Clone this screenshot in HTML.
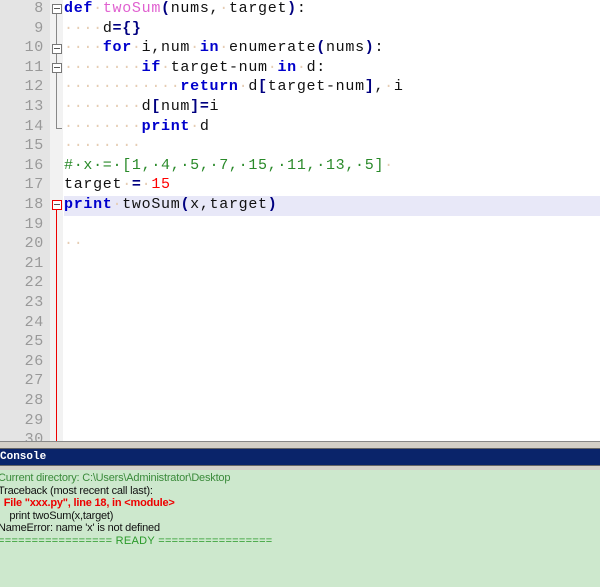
<!DOCTYPE html>
<html><head><style>
body{margin:0;width:600px;height:587px;overflow:hidden;background:#fff;position:relative;font-family:"Liberation Mono",monospace}
#gut{position:absolute;left:0;top:0;width:50px;height:442px;background:#e4e4e4}
#fold{position:absolute;left:50px;top:0;width:13px;height:442px;background:#f2f2f2}
.ln{position:absolute;left:0;width:44px;text-align:right;color:#999;font-size:15px;line-height:19.6px;letter-spacing:0.7px}
.cl{position:absolute;left:64px;font-size:15px;letter-spacing:0.7px;line-height:19.6px;white-space:pre;color:#111}
.k{color:#00c;font-weight:bold}.f{color:#e060d0}.o{color:#000080;font-weight:bold}.d{color:#e6cdb4}.c{color:#2a8a2a}.n{color:#f00}
.box{position:absolute;left:52px;width:8px;height:8px;border:1px solid #777;background:#fff}
.box:after{content:"";position:absolute;left:1px;top:3px;width:6px;height:1px;background:#555}
#con{position:absolute;left:0;top:470px;width:600px;height:117px;background:#cde8cd;font-family:"Liberation Sans",sans-serif;font-size:11px;letter-spacing:-0.2px;line-height:12.6px;color:#111}
</style></head><body>
<div id="gut"></div><div id="fold"></div>
<div style="position:absolute;left:64px;top:196px;width:536px;height:20px;background:#e8e8f8"></div>
<div style="position:absolute;left:56px;top:13px;width:1px;height:116px;background:#888"></div>
<div style="position:absolute;left:56px;top:128px;width:6px;height:1px;background:#888"></div>
<div style="position:absolute;left:56px;top:210px;width:1px;height:232px;background:#e00"></div>
<div class="box" style="top:4px"></div>
<div class="box" style="top:44px"></div>
<div class="box" style="top:63px"></div>
<div class="box" style="top:200px;border-color:#e00"></div>
<div id="nums"></div>
<script>
var h='';for(var i=8;i<=30;i++){h+='<div class="ln" style="top:'+((i-8)*19.6-1)+'px">'+i+'</div>'}
document.getElementById('nums').innerHTML=h;
</script>
<div class="cl" style="top:-1px"><span class="k">def</span><span class="d">·</span><span class="f">twoSum</span><span class="o">(</span>nums,<span class="d">·</span>target<span class="o">)</span>:
<span class="d">····</span>d<span class="o">={}</span>
<span class="d">····</span><span class="k">for</span><span class="d">·</span>i,num<span class="d">·</span><span class="k">in</span><span class="d">·</span>enumerate<span class="o">(</span>nums<span class="o">)</span>:
<span class="d">········</span><span class="k">if</span><span class="d">·</span>target-num<span class="d">·</span><span class="k">in</span><span class="d">·</span>d:
<span class="d">············</span><span class="k">return</span><span class="d">·</span>d<span class="o">[</span>target-num<span class="o">]</span>,<span class="d">·</span>i
<span class="d">········</span>d<span class="o">[</span>num<span class="o">]=</span>i
<span class="d">········</span><span class="k">print</span><span class="d">·</span>d
<span class="d">········</span>
<span class="c">#·x·=·[1,·4,·5,·7,·15,·11,·13,·5]</span><span class="d">·</span>
target<span class="d">·</span><span class="o">=</span><span class="d">·</span><span class="n">15</span>
<span class="k">print</span><span class="d">·</span>twoSum<span class="o">(</span>x,target<span class="o">)</span>

<span class="d">··</span></div>
<div style="position:absolute;left:0;top:441px;width:600px;height:8px;background:#d4d0c8;border-top:1px solid #888;border-bottom:1px solid #666;box-sizing:border-box"></div>
<div style="position:absolute;left:0;top:449px;width:600px;height:16px;background:#0a246a;color:#fff;font-family:'Liberation Mono',monospace;font-size:11px;line-height:16px;font-weight:bold">Console</div>
<div style="position:absolute;left:0;top:465px;width:600px;height:5px;background:#d4d0c8;border-top:1px solid #666;box-sizing:border-box"></div>
<div id="con"><div style="margin-left:-2px;padding-top:2px">
<div style="color:#3a8a3a">Current directory: C:\Users\Administrator\Desktop</div>
<div>Traceback (most recent call last):</div>
<div style="color:#e00;font-weight:bold">&nbsp;&nbsp;File "xxx.py", line 18, in &lt;module&gt;</div>
<div>&nbsp;&nbsp;&nbsp;&nbsp;print twoSum(x,target)</div>
<div>NameError: name 'x' is not defined</div>
<div style="color:#2a9a2a;letter-spacing:0.3px">================= READY =================</div>
</div></div>
</body></html>
